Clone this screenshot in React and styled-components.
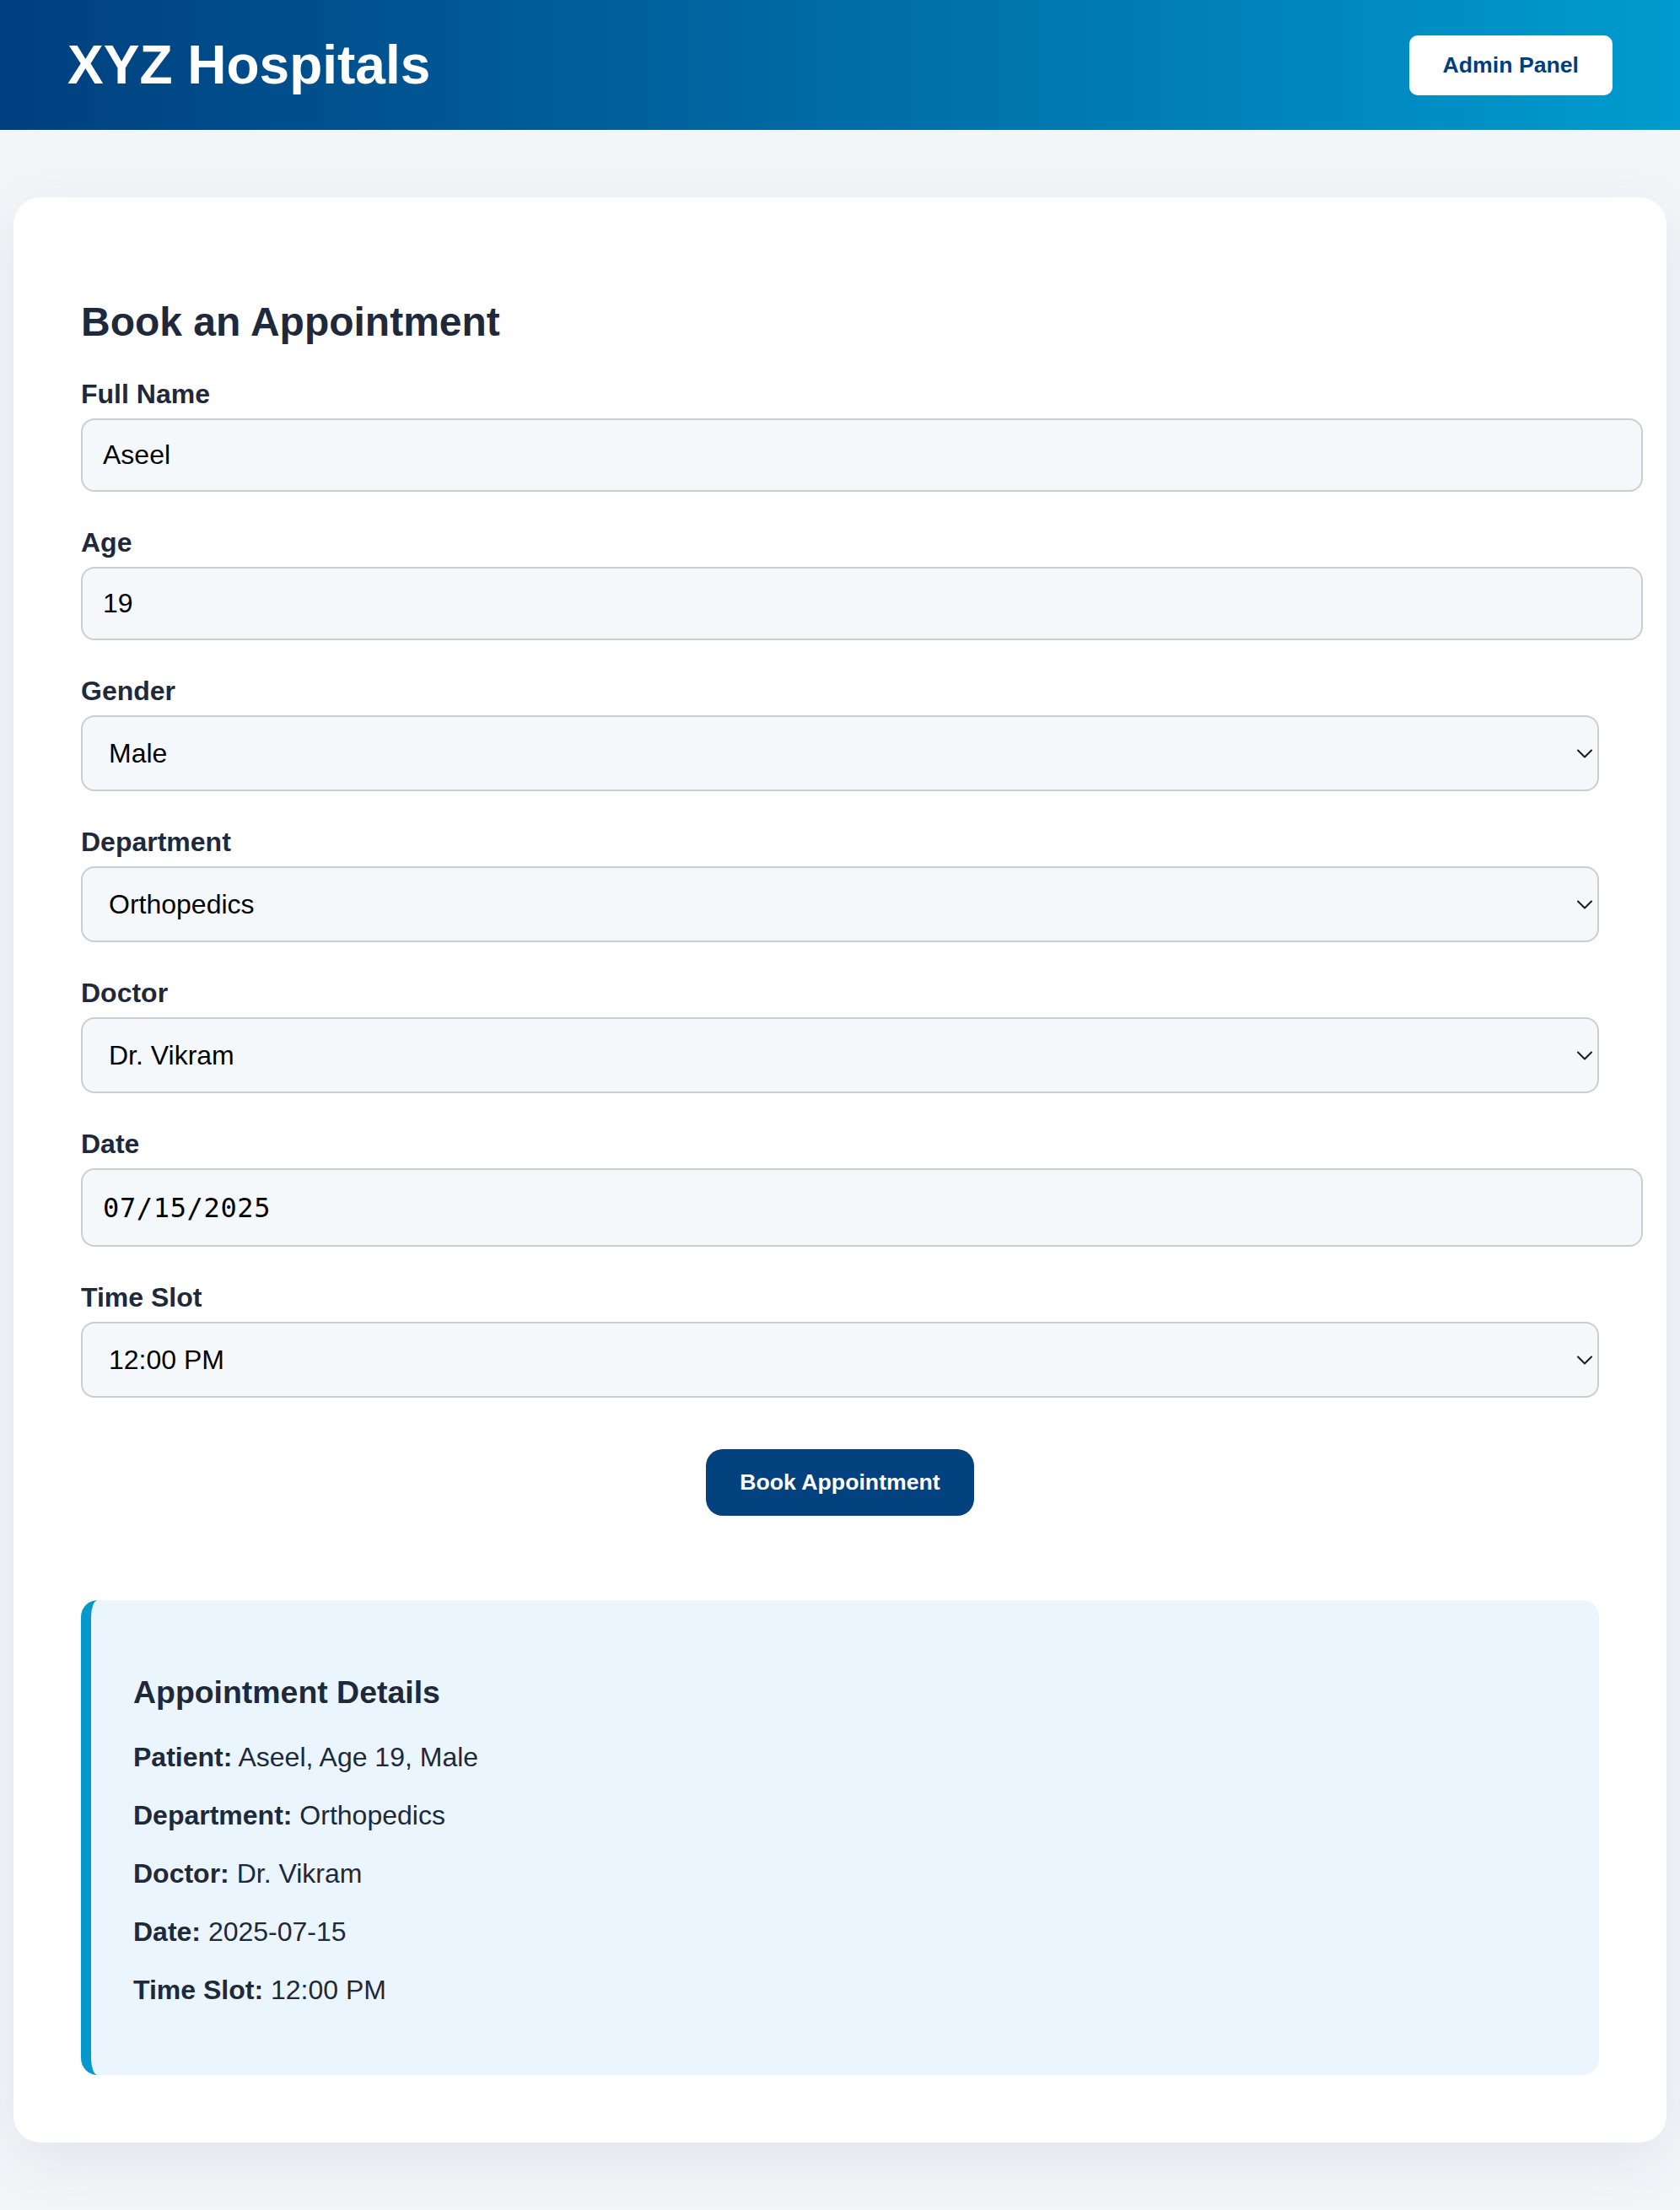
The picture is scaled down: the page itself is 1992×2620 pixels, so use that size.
import React from "react";
import styled, { createGlobalStyle } from "styled-components";

const GlobalStyle = createGlobalStyle`
  html, body {
    margin: 0;
    padding: 0;
    background: #f3f6f9;
    font-family: "Liberation Sans", Arial, Helvetica, sans-serif;
    font-size: 32px;
    color: #1e293b;
  }
  * { font-family: inherit; }
`;

const Header = styled.header`
  display: flex;
  justify-content: space-between;
  align-items: center;
  padding: 40px 80px;
  background: linear-gradient(90deg, #003f7f 0%, #0070aa 55%, #009ccf 100%);
  color: #ffffff;
`;

const Brand = styled.h1`
  margin: 0;
  font-size: 64px;
  line-height: 74px;
  font-weight: 700;
`;

const AdminButton = styled.button`
  background: #ffffff;
  color: #003f7f;
  border: none;
  border-radius: 10px;
  padding: 20px 40px;
  font-size: 26.67px;
  line-height: 31px;
  font-weight: 700;
  cursor: pointer;
`;

const Main = styled.main`
  padding: 80px 16px 80px;
`;

const Card = styled.section`
  background: #ffffff;
  border-radius: 32px;
  padding: 80px;
  box-shadow: 0 20px 70px rgba(30, 50, 80, 0.09);
`;

const Title = styled.h2`
  margin: 40px 0;
  font-size: 48px;
  line-height: 55px;
  font-weight: 700;
  color: #1e293b;
`;

const Field = styled.div`
  margin-bottom: 42px;
`;

const Label = styled.label`
  display: block;
  font-size: 32px;
  line-height: 37px;
  font-weight: 700;
  color: #1e293b;
  margin-bottom: 10px;
`;

const TextInput = styled.input`
  display: block;
  box-sizing: content-box;
  width: 100%;
  height: ${(p) => (p.$mono ? "89px" : "83px")};
  padding: 0 24px;
  margin: 0;
  border: 2px solid #cbcdd0;
  border-radius: 16px;
  background: #f5f8fb;
  color: #000000;
  font-size: 32px;
  font-family: ${(p) =>
    p.$mono ? '"DejaVu Sans Mono", "Liberation Mono", monospace' : '"Liberation Sans", Arial, sans-serif'};
  letter-spacing: ${(p) => (p.$mono ? "0.65px" : "normal")};
  outline: none;
`;

const SelectWrap = styled.div`
  position: relative;
`;

const Select = styled.select`
  display: block;
  box-sizing: border-box;
  width: 100%;
  height: 90px;
  margin: 0;
  padding: 0 40px 0 31px;
  border: 2px solid #cbcdd0;
  border-radius: 16px;
  background: #f5f8fb;
  color: #000000;
  font-size: 32px;
  appearance: none;
  -webkit-appearance: none;
  outline: none;
`;

const Chevron = styled.svg`
  position: absolute;
  right: 8px;
  top: 50%;
  width: 18px;
  height: 11px;
  margin-top: -5px;
  pointer-events: none;
`;

const Actions = styled.div`
  display: flex;
  justify-content: center;
  margin-top: 61px;
`;

const SubmitButton = styled.button`
  background: #03417f;
  color: #ffffff;
  border: none;
  border-radius: 20px;
  padding: 24px 40px;
  font-size: 26.67px;
  line-height: 31px;
  font-weight: 700;
  cursor: pointer;
`;

const Details = styled.div`
  margin-top: 100px;
  background: #ebf5fe;
  border-left: 12px solid #0399cc;
  border-radius: 20px;
  padding: 50px 50px;
`;

const DetailsTitle = styled.h3`
  margin: 38px 0 37px;
  font-size: 37.44px;
  line-height: 43px;
  font-weight: 700;
  color: #1e293b;
`;

const DetailLine = styled.p`
  margin: 32px 0;
  font-size: 32px;
  line-height: 37px;
  color: #1e293b;
`;

const Key = styled.strong`
  font-weight: 700;
`;

function SelectField({ label, value, options }) {
  return (
    <Field>
      <Label>{label}</Label>
      <SelectWrap>
        <Select defaultValue={value}>
          {options.map((o) => (
            <option key={o} value={o}>
              {o}
            </option>
          ))}
        </Select>
        <Chevron viewBox="0 0 18 11" fill="none">
          <path d="M1 1.5 L9 9.5 L17 1.5" stroke="#1a1a1a" strokeWidth="2" strokeLinecap="round" strokeLinejoin="round" />
        </Chevron>
      </SelectWrap>
    </Field>
  );
}

function TextField({ label, value, mono }) {
  return (
    <Field>
      <Label>{label}</Label>
      <TextInput type="text" defaultValue={value} $mono={mono} />
    </Field>
  );
}

const details = [
  ["Patient:", "Aseel, Age 19, Male"],
  ["Department:", "Orthopedics"],
  ["Doctor:", "Dr. Vikram"],
  ["Date:", "2025-07-15"],
  ["Time Slot:", "12:00 PM"],
];

export default function App() {
  return (
    <>
      <GlobalStyle />
      <Header>
        <Brand>XYZ Hospitals</Brand>
        <AdminButton>Admin Panel</AdminButton>
      </Header>
      <Main>
        <Card>
          <Title>Book an Appointment</Title>
          <form onSubmit={(e) => e.preventDefault()}>
            <TextField label="Full Name" value="Aseel" />
            <TextField label="Age" value="19" />
            <SelectField label="Gender" value="Male" options={["Male", "Female", "Other"]} />
            <SelectField
              label="Department"
              value="Orthopedics"
              options={["Cardiology", "Neurology", "Orthopedics", "Pediatrics"]}
            />
            <SelectField label="Doctor" value="Dr. Vikram" options={["Dr. Vikram", "Dr. Mehta", "Dr. Rao"]} />
            <TextField label="Date" value="07/15/2025" mono />
            <SelectField
              label="Time Slot"
              value="12:00 PM"
              options={["10:00 AM", "11:00 AM", "12:00 PM", "02:00 PM", "04:00 PM"]}
            />
            <Actions>
              <SubmitButton type="submit">Book Appointment</SubmitButton>
            </Actions>
          </form>
          <Details>
            <DetailsTitle>Appointment Details</DetailsTitle>
            {details.map(([k, v]) => (
              <DetailLine key={k}>
                <Key>{k}</Key> {v}
              </DetailLine>
            ))}
          </Details>
        </Card>
      </Main>
    </>
  );
}
